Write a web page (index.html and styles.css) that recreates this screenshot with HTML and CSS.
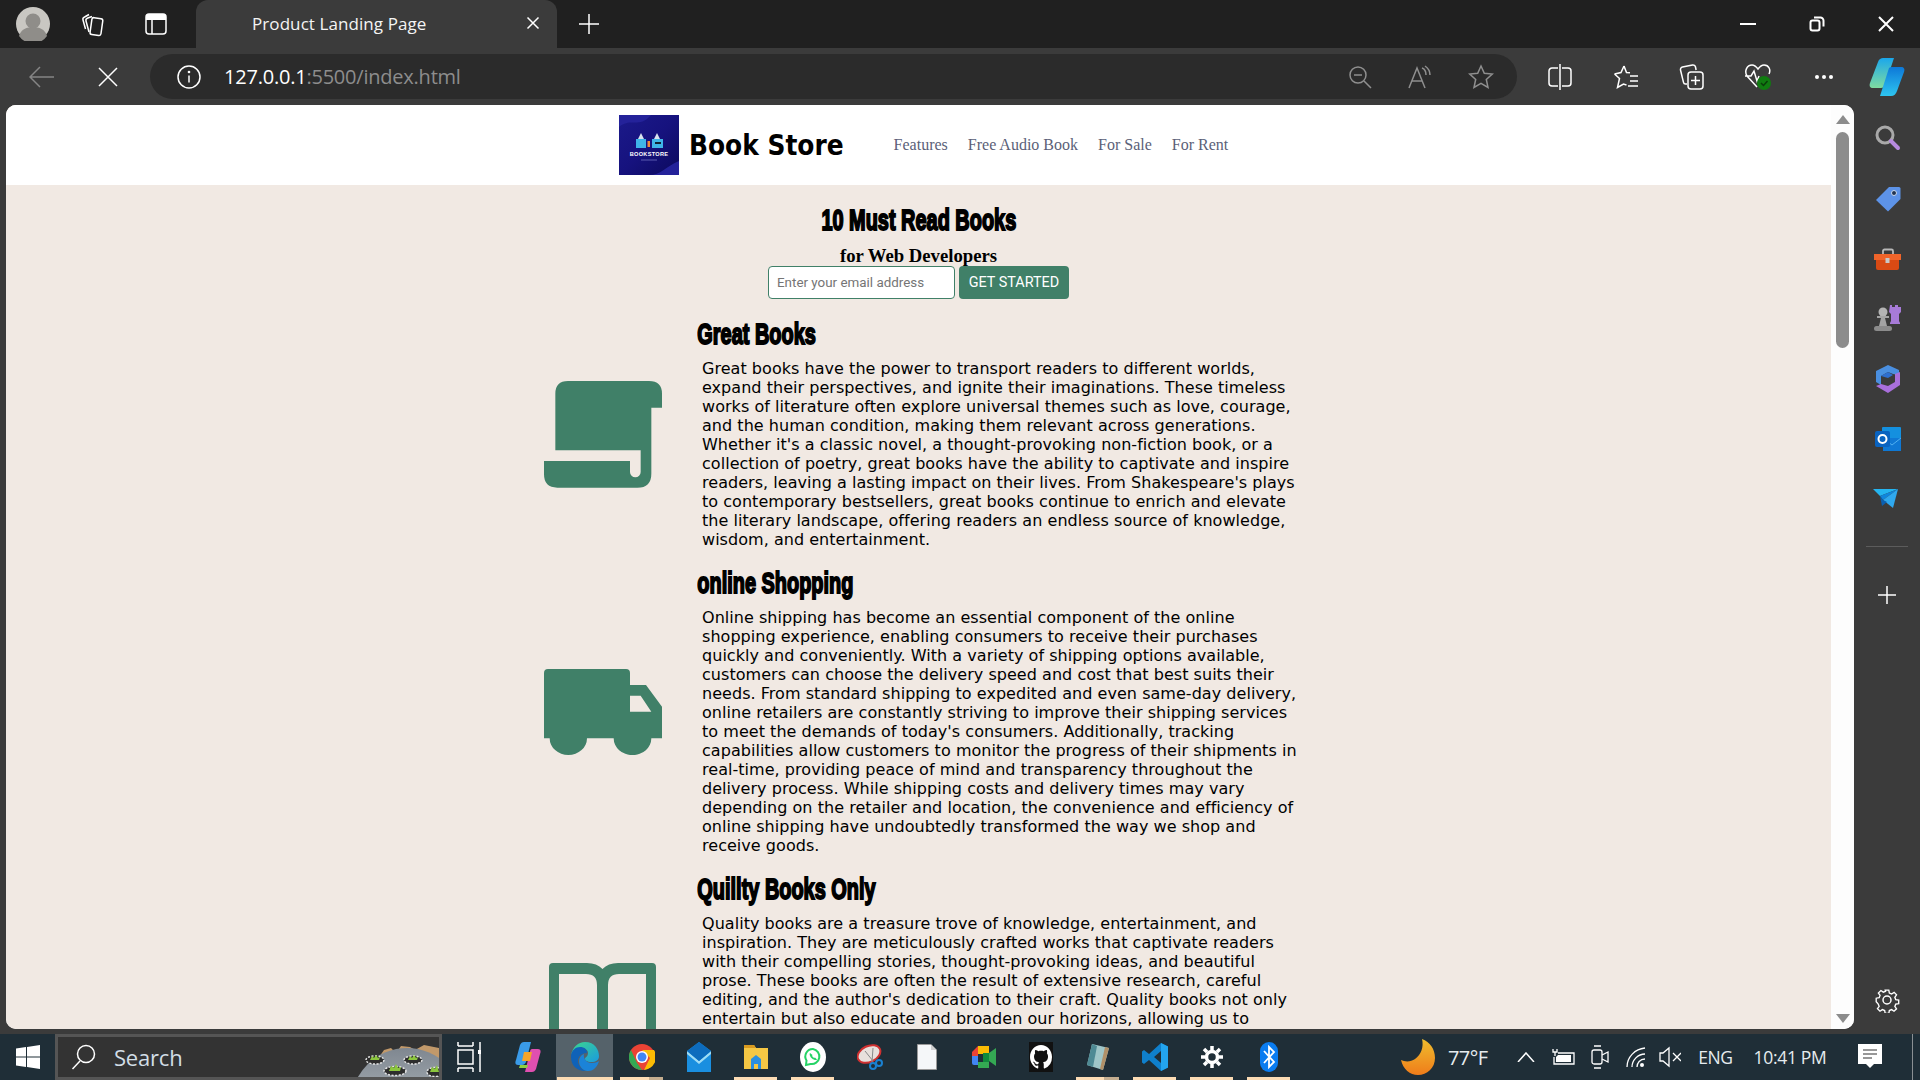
FILE: index.html
```html
<!DOCTYPE html>
<html lang="en">
<head>
<meta charset="utf-8">
<title>Product Landing Page</title>
<link rel="stylesheet" href="styles.css">
</head>
<body>
<div class="tabstrip">
  <div class="strip-left">
    <svg class="btn-profile" width="34" height="34" viewBox="0 0 34 34"><circle cx="17" cy="17" r="17" fill="#c9c7c2"/><circle cx="17" cy="14" r="7.500" fill="#8f8d89"/><path d="M3 29c2-7 8-9 14-9s12 2 14 9a17 17 0 0 1-28 0z" fill="#8f8d89"/></svg>
    <svg class="btn-strip" width="26" height="26" viewBox="0 0 26 26"><g class="ln"><rect x="11" y="7" width="11" height="17" rx="2" transform="rotate(8 16 15)"/><path d="M9 21L6 10c-.4-1.500.4-2.500 1.800-3L12 5.500"/><path d="M5.500 18L3 9c-.4-1.500.3-2.500 1.600-3L9 3.500"/></g></svg>
    <svg class="btn-strip" width="26" height="26" viewBox="0 0 26 26"><rect class="ln" x="3" y="3" width="20" height="20" rx="3"/><path d="M3 6a3 3 0 0 1 3-3h14a3 3 0 0 1 3 3v3H3z" fill="#fff"/><path class="ln" d="M9 9v14"/></svg>
  </div>
  <div class="tab">
    <span class="tab-title">Product Landing Page</span>
    <svg width="14" height="14" viewBox="0 0 14 14"><path class="ln" d="M1.500 1.500l11 11M12.500 1.500l-11 11"/></svg>
  </div>
  <svg class="tab-new" width="22" height="22" viewBox="0 0 22 22"><path class="ln" d="M11 1v20M1 11h20"/></svg>
  <div class="window-controls">
    <svg width="16" height="16" viewBox="0 0 16 16"><path class="ln bold" d="M0 8h16"/></svg>
    <svg width="16" height="16" viewBox="0 0 16 16"><rect class="ln bold" x="1.500" y="4.500" width="9" height="10" rx="2"/><path class="ln bold" d="M5 1.500h6a3 3 0 0 1 3.500 3v6"/></svg>
    <svg width="16" height="16" viewBox="0 0 16 16"><path class="ln bold" d="M1 1l14 14M15 1L1 15"/></svg>
  </div>
</div>

<div class="toolbar">
  <div class="tool"><svg width="26" height="22" viewBox="0 0 26 22"><path class="ln dim" d="M25 11H1M11 1L1 11l10 10"/></svg></div>
  <div class="tool"><svg width="20" height="20" viewBox="0 0 20 20"><path class="ln" d="M1 1l18 18M19 1L1 19"/></svg></div>
  <div class="address">
    <svg class="info" width="24" height="24" viewBox="0 0 24 24"><circle class="ln" cx="12" cy="12" r="11"/><path class="ln" d="M12 10.500v7"/><circle cx="12" cy="7" r="1.300" fill="#fff"/></svg>
    <span class="url"><b>127.0.0.1</b>:5500/index.html</span>
    <div class="addr-actions">
      <svg width="24" height="24" viewBox="0 0 24 24"><g class="ln dim2"><circle cx="10" cy="10" r="8"/><path d="M6 10h8M16 16l7 7"/></g></svg>
      <svg width="26" height="24" viewBox="0 0 26 24"><g class="ln dim2"><path d="M2 23L10 3l8 20M5 16h10"/><path d="M15 3c3 1 4 4 4 7M18 1c3 2 5 5 5 9"/></g></svg>
      <svg width="26" height="26" viewBox="0 0 26 26"><path class="ln dim2" d="M13 2l3.300 7.300 8 .8-6 5.400 1.700 7.900-7-4-7 4 1.700-7.900-6-5.400 8-.8z"/></svg>
    </div>
  </div>
  <div class="tools-right">
    <div class="tool"><svg width="24" height="26" viewBox="0 0 24 26"><g class="ln"><path d="M10 4H4a3 3 0 0 0-3 3v12a3 3 0 0 0 3 3h6M14 4h6a3 3 0 0 1 3 3v12a3 3 0 0 1-3 3h-6"/><path d="M12 0v26"/></g></svg></div>
    <div class="tool"><svg width="26" height="26" viewBox="0 0 26 26"><g class="ln"><path d="M11 2l2.500 6.500 3.500.3M1.500 10l6.500-1.500L11 2M1.500 10l5 4.500-2 9 6-3.500 3 1"/><path d="M17 12h8M17 17h8M15 22h10"/></g></svg></div>
    <div class="tool"><svg width="26" height="28" viewBox="0 0 26 28"><g class="ln"><path d="M8 21H6.500a2 2 0 0 1-2-1.600L1.500 7a2.500 2.500 0 0 1 2-3l10-2a2.500 2.500 0 0 1 3 2l.6 3"/><rect x="9" y="9" width="15" height="17" rx="3"/><path d="M16.500 13v9M12 17.500h9"/></g></svg></div>
    <div class="tool"><svg width="28" height="28" viewBox="0 0 28 28"><path class="ln" d="M13 24L3 13C0 8 3 2 8 2c3 0 4.500 2 6 4 1.500-2 3-4 6-4 5 0 7 5 5 9M1 13h6l3-5 3 10 2-5"/><circle cx="20" cy="20" r="7" fill="#107c10"/><path d="M17 20l2.500 2.500 4-4.500" fill="none" stroke="#0a3d0a" stroke-width="1.500"/></svg></div>
    <div class="tool"><svg width="20" height="6" viewBox="0 0 20 6"><circle cx="3" cy="3" r="2" fill="#fff"/><circle cx="10" cy="3" r="2" fill="#fff"/><circle cx="17" cy="3" r="2" fill="#fff"/></svg></div>
    <div class="tool tool-copilot"><svg width="36" height="38" viewBox="0 0 36 38"><defs><linearGradient id="cpa" x1="0" y1="0" x2="0" y2="1"><stop offset="0" stop-color="#1aa7ec"/><stop offset="1" stop-color="#7fdca0"/></linearGradient><linearGradient id="cpb" x1="0" y1="0" x2="0" y2="1"><stop offset="0" stop-color="#0d78d8"/><stop offset="1" stop-color="#2ec5f0"/></linearGradient></defs><path d="M14 0h11l-9 27c-1 2-2 3-4 3H4c-3 0-4-2-3-5l8-21c1-3 3-4 5-4z" fill="url(#cpa)"/><path d="M24 9h8c3 0 4 2 3 5l-7 19c-1 3-3 5-6 5H11l9-28c1-1 2-1 4-1z" fill="url(#cpb)"/></svg></div>
  </div>
</div>

<div class="workspace">
  <div class="viewport">
    <div class="page">
      <header class="site-header">
        <svg class="logo" width="60" height="60" viewBox="0 0 60 60"><defs><linearGradient id="lg" x1="0" y1="0" x2="1" y2="1"><stop offset="0" stop-color="#1b1a8a"/><stop offset=".5" stop-color="#16127e"/><stop offset="1" stop-color="#0c0a5c"/></linearGradient></defs><rect width="60" height="60" fill="url(#lg)"/><path d="M0 12C12 2 20 14 32 0H0z" fill="#24229a"/><path d="M60 46C46 52 42 60 30 60h30z" fill="#24229a"/><path d="M19 24l3-6 3 6z" fill="#d9e4ee"/><path d="M35 24l3-6 3 6z" fill="#d9e4ee"/><rect x="17" y="24" width="10" height="9" fill="#3fb4e8"/><rect x="33" y="24" width="11" height="9" fill="#3fb4e8"/><rect x="28.500" y="26" width="2.500" height="6" fill="#ef8a3a"/><rect x="36" y="27" width="6" height="2" fill="#123"/><text class="logo-text" x="30" y="41" text-anchor="middle">BOOKSTORE</text><path d="M22 45h16" stroke="#5a5ab0" stroke-width="1"/></svg>
        <div class="brand">Book Store</div>
        <nav class="site-nav"><span>Features</span><span>Free Audio Book</span><span>For Sale</span><span>For Rent</span></nav>
      </header>
      <main class="content">
        <section class="hero">
          <h2 class="display">10 Must Read Books</h2>
          <p class="hero-sub">for Web Developers</p>
          <form class="signup">
            <input class="email" type="email" placeholder="Enter your email address">
            <button class="cta" type="button">GET STARTED</button>
          </form>
        </section>
        <section class="features">
          <article class="feature">
            <div class="feature-icon"><svg width="118" height="107" viewBox="0 0 354 321"><path class="fill-green" d="M34 208V38Q34 0 72 0H315Q354 0 354 38V80H322V278Q322 320 280 320H40Q0 320 0 280V240H258V273a16 16 0 0 0 32 0V208Z"/></svg></div>
            <div class="feature-body">
              <h2 class="display">Great Books</h2>
              <p>Great books have the power to transport readers to different worlds,<br>expand their perspectives, and ignite their imaginations. These timeless<br>works of literature often explore universal themes such as love, courage,<br>and the human condition, making them relevant across generations.<br>Whether it's a classic novel, a thought-provoking non-fiction book, or a<br>collection of poetry, great books have the ability to captivate and inspire<br>readers, leaving a lasting impact on their lives. From Shakespeare's plays<br>to contemporary bestsellers, great books continue to enrich and elevate<br>the literary landscape, offering readers an endless source of knowledge,<br>wisdom, and entertainment.</p>
            </div>
          </article>
          <article class="feature">
            <div class="feature-icon"><svg width="118" height="86" viewBox="0 0 354 258"><path class="fill-green" fill-rule="evenodd" d="M12 0H246Q258 0 258 12V48H306L354 113V208H322A56 50 0 0 1 209 208H129A56 50 0 0 1 17 208H0V12Q0 0 12 0ZM258 80V128H322L290 80Z"/></svg></div>
            <div class="feature-body">
              <h2 class="display">online Shopping</h2>
              <p>Online shipping has become an essential component of the online<br>shopping experience, enabling consumers to receive their purchases<br>quickly and conveniently. With a variety of shipping options available,<br>customers can choose the delivery speed and cost that best suits their<br>needs. From standard shipping to expedited and even same-day delivery,<br>online retailers are constantly striving to improve their shipping services<br>to meet the demands of today's consumers. Additionally, tracking<br>capabilities allow customers to monitor the progress of their shipments in<br>real-time, providing peace of mind and transparency throughout the<br>delivery process. While shipping costs and delivery times may vary<br>depending on the retailer and location, the convenience and efficiency of<br>online shipping have undoubtedly transformed the way we shop and<br>receive goods.</p>
            </div>
          </article>
          <article class="feature feature-tall">
            <div class="feature-icon"><svg width="107" height="104" viewBox="0 0 107 104"><path class="fill-green" fill-rule="evenodd" d="M4 0H38Q48 0 53.500 6Q59 0 69 0H103Q107 0 107 4V104H0V4Q0 0 4 0ZM10 11V94H48V22Q48 11 37 11ZM59 22V94H97V11H70Q59 11 59 22Z"/></svg></div>
            <div class="feature-body">
              <h2 class="display">Quillty Books Only</h2>
              <p>Quality books are a treasure trove of knowledge, entertainment, and<br>inspiration. They are meticulously crafted works that captivate readers<br>with their compelling stories, thought-provoking ideas, and beautiful<br>prose. These books are often the result of extensive research, careful<br>editing, and the author's dedication to their craft. Quality books not only<br>entertain but also educate and broaden our horizons, allowing us to</p>
            </div>
          </article>
        </section>
      </main>
    </div>
    <div class="scrollbar">
      <span class="arrow-up"></span>
      <span class="thumb"></span>
      <span class="arrow-down"></span>
    </div>
  </div>
  <aside class="sidebar">
    <svg width="26" height="26" viewBox="0 0 26 26"><circle cx="10" cy="10" r="8" fill="none" stroke="#a9a9a9" stroke-width="3"/><path d="M16 16l7 7" stroke="#b78ae0" stroke-width="4" stroke-linecap="round"/></svg>
    <svg width="26" height="26" viewBox="0 0 26 26"><path d="M14 1h10a1.500 1.500 0 0 1 1.500 1.500V13L13 25.500 1 14z" fill="#5d93e8"/><circle cx="19" cy="7" r="2.500" fill="#22344f" stroke="#c8d8f0"/></svg>
    <svg width="28" height="22" viewBox="0 0 28 22"><path d="M9 6V3a1.500 1.500 0 0 1 1.500-1.500h7A1.500 1.500 0 0 1 19 3v3" fill="none" stroke="#b8b8b8" stroke-width="1.800"/><rect y="6" width="27" height="6" fill="#f0642a"/><path d="M2 12h23v8a2 2 0 0 1-2 2H4a2 2 0 0 1-2-2z" fill="#d94a14"/><rect x="11.500" y="10" width="4" height="5" fill="#c8c8c8"/></svg>
    <svg width="28" height="28" viewBox="0 0 28 28"><path d="M16 1h2v2h3V1h3v2h3V1h0v7l-2 2v7l1 2v1H16v-1l1-2v-7l-2-2z" fill="#a77bd8"/><circle cx="9" cy="8" r="4.500" fill="#b4b4b4"/><path d="M3 12h12v2H11l2 8H5l2-8H3z" fill="#a4a4a4"/><rect x="0" y="22" width="18" height="5" rx="2.500" fill="#8c8c8c"/></svg>
    <svg width="26" height="28" viewBox="0 0 26 28"><path d="M13 0L24 5v5l-6-1-5-2-7 4v9l-5-3V6z" fill="#4a8fe0"/><path d="M1 21l5-2 7 2 7-4v-8l5-2v13l-12 8z" fill="#a96fdc"/><path d="M6 11l7-4 5 3-5 3z" fill="#2e6fd0"/></svg>
    <svg width="26" height="26" viewBox="0 0 26 26"><rect x="7" y="1" width="19" height="16" rx="1" fill="#1490df"/><path d="M8 12h18v13H8z" fill="#0f78d4"/><path d="M8 12l9 7 9-7" fill="none" stroke="#50b0f0"/><rect y="5" width="15" height="16" rx="2" fill="#0a63c0"/><circle cx="7.500" cy="13" r="4" fill="none" stroke="#fff" stroke-width="2"/></svg>
    <svg width="28" height="20" viewBox="0 0 28 20"><path d="M0 1h25L7 8z" fill="#25b5f0"/><path d="M25 1L7 8l3 4z" fill="#0f86dc"/><path d="M25 1l-5 19-10-8z" fill="#2fa8ee"/><path d="M7 8l2 10 5-4-4-2z" fill="#0a5fb0"/></svg>
    <span class="side-divider"></span>
    <svg width="20" height="20" viewBox="0 0 20 20"><path class="ln" d="M10 1v18M1 10h18"/></svg>
    <svg class="side-gear" width="26" height="26" viewBox="0 0 26 26"><circle class="ln" cx="13" cy="13" r="4"/><path class="ln" d="M11 2h4l.6 3.300 2.500 1 2.800-1.800 2.700 2.800-1.900 2.700 1 2.500 3.300.5v4l-3.300.6-1 2.500 1.900 2.700-2.800 2.700-2.700-1.800-2.500 1-.6 3.300h-4l-.6-3.300-2.500-1-2.700 1.800-2.800-2.800 1.900-2.700-1-2.400L1 15v-4l3.300-.6 1-2.500-1.900-2.700 2.800-2.700 2.700 1.800 2.500-1z" transform="translate(1.300 1.300) scale(.9)"/></svg>
  </aside>
</div>

<footer class="taskbar">
  <div class="start"><svg width="24" height="24" viewBox="0 0 24 24"><path d="M0 3.400l10-1.400v9.500H0zM11 1.900L24 0v11.500H11zM0 12.500h10V22L0 20.600zM11 12.500h13V24l-13-1.900z" fill="#fff"/></svg></div>
  <div class="searchbox">
    <svg width="26" height="26" viewBox="0 0 26 26"><circle class="ln" cx="15" cy="10" r="8.500"/><path class="ln" d="M9 17l-7.500 8"/></svg>
    <span class="search-label">Search</span>
    <svg class="search-art" width="88" height="35" viewBox="0 0 88 35"><defs><linearGradient id="sp" x1="0" y1="0" x2="0" y2="1"><stop offset="0" stop-color="#7f8790"/><stop offset="1" stop-color="#cfd6da"/></linearGradient></defs><path d="M26 18l7-10 7-2 5 5 5-7 9 1 5 3 9-5 15 3v14z" fill="#c2996a"/><circle cx="56" cy="62" r="56" fill="url(#sp)"/><g fill="#2d2d2d" stroke="#e4e4e4" stroke-width="1.500" stroke-dasharray="2 1.500"><ellipse cx="24" cy="18" rx="9" ry="4"/><ellipse cx="62" cy="18" rx="9" ry="4"/><ellipse cx="44" cy="29" rx="11" ry="4.500"/><ellipse cx="84" cy="30" rx="8" ry="4.500"/></g><g fill="#8cc63e"><path d="M19 18l2-4 2 2 2-3 2 3 2-1-1 3z"/><path d="M57 18l2-4 2 2 2-3 2 3 2-1-1 3z"/><path d="M38 29l2-5 3 2 2-4 2 4 3-1-1 4z"/><path d="M79 30l2-5 3 2 2-4 2 7z"/></g></svg>
  </div>
  <div class="apps">
    <div class="app app-taskview"><svg width="24" height="32" viewBox="0 0 24 32"><g class="ln"><rect x="1" y="9" width="15" height="14"/><path d="M1 5V1M16 5V1M1 5h15M1 27h15M1 31v-4M16 31v-4M23 1v30"/></g><rect x="21" y="9" width="4" height="4" fill="#fff"/></svg></div>
    <div class="app"><svg width="26" height="30" viewBox="0 0 26 30"><path d="M9 0h7L11 20c-1 2-2 3-4 3H3c-3 0-3-3-2-5L5 3c1-2 2-3 4-3z" fill="#3a9be8"/><path d="M17 7h6c3 0 3 3 2 5l-4 15c-1 2-2 3-4 3h-7l5-20c0-2 1-3 2-3z" fill="#e04fb0"/><path d="M9 10h8l-2 9H7z" fill="#f4a52a"/><path d="M5 23h8l-1 3H4z" fill="#8ed040"/></svg></div>
    <div class="app app-active"><svg width="28" height="30" viewBox="0 0 28 30"><defs><linearGradient id="edg" x1="0" y1="0" x2="1" y2="1"><stop offset="0" stop-color="#3cd68c"/><stop offset="1" stop-color="#1a9be0"/></linearGradient></defs><path d="M14 0C24 0 28 8 28 14c0 4-3 6-8 6-4 0-6-2-6-3 0-2 3-2 3-6 0-4-5-6-9-5-4 1-7 4-8 7C2 5 7 0 14 0z" fill="url(#edg)"/><path d="M0 15C0 8 5 5 9 5c4 0 7 2 7 6-5 0-9 3-9 8 0 5 4 9 9 10C7 30 0 24 0 15z" fill="#0f62b8"/><path d="M16 29c-5-1-8-5-8-10 0-3 2-6 5-7-1 4 2 9 8 9 3 0 5-1 7-2-1 5-6 11-12 10z" fill="#1b83d8"/></svg></div>
    <div class="app"><svg width="26" height="30" viewBox="0 0 26 30" preserveAspectRatio="none"><circle cx="13" cy="15" r="13" fill="#ea4335"/><path d="M2 8L8 21 13 28a13 13 0 0 1-11-20z" fill="#34a853"/><path d="M13 8h12a13 13 0 0 1-10 20l6-12z" fill="#fbbc04"/><circle cx="13" cy="15" r="6" fill="#fff"/><circle cx="13" cy="15" r="4.500" fill="#4285f4"/></svg></div>
    <div class="app"><svg width="24" height="30" viewBox="0 0 24 30"><path d="M12 0l12 9v21H0V9z" fill="#1a8fe0"/><path d="M0 9l12 10 12-10v3L12 22 0 12z" fill="#9edcf5"/><path d="M12 0l12 9-12 10L0 9z" fill="#0d6cbd"/></svg></div>
    <div class="app"><svg width="24" height="26" viewBox="0 0 24 26"><path d="M0 1h10l2 3h12v21H0z" fill="#f5c744"/><path d="M0 1h10l2 3H0z" fill="#d89a20"/><path d="M7 15l5-4 5 4v10h-3v-5h-4v5H7z" fill="#2a8fe0"/></svg></div>
    <div class="app"><svg width="26" height="30" viewBox="0 0 26 30"><ellipse cx="13" cy="15" rx="13" ry="15" fill="#fff"/><path d="M13 7a7.500 7.500 0 0 0-6.500 11.500L6 23l4.500-1A7.500 7.500 0 1 0 13 7z" fill="none" stroke="#25d366" stroke-width="2"/><path d="M10 11c-1 1 0 4 2 5.500s4 2 5 1l-2-2-1 .5-2-2 .5-1z" fill="#25d366"/></svg></div>
    <div class="app"><svg width="26" height="28" viewBox="0 0 26 28"><ellipse cx="12" cy="11" rx="12" ry="8" fill="#e8e0dc" stroke="#d03030" stroke-width="2" transform="rotate(-25 12 11)"/><path d="M8 8l8 10M16 5l-1 14" stroke="#888" fill="none"/><circle cx="16" cy="23" r="3" fill="none" stroke="#1a80d0" stroke-width="2"/><circle cx="22" cy="20" r="3" fill="none" stroke="#1a80d0" stroke-width="2"/></svg></div>
    <div class="app"><svg width="20" height="26" viewBox="0 0 20 26"><path d="M.5.500H14L19.500 6v19.500H.5z" fill="#f5f7f9" stroke="#999"/><path d="M14 .500V6h5.500" fill="#d0d0d0"/></svg></div>
    <div class="app"><svg width="26" height="26" viewBox="0 0 26 26"><path d="M7 2h11v8H7z" fill="#fbbc04"/><path d="M7 2L1 8v4h6z" fill="#ea4335"/><path d="M1 12h6v6h0v3H3a2 2 0 0 1-2-2z" fill="#4285f4"/><path d="M7 18h11v6H7z" fill="#34a853"/><path d="M18 9l7-5v18l-7-5z" fill="#34a853"/><path d="M12 9h6v9h-6z" fill="#0f8a3c"/></svg></div>
    <div class="app"><div class="gh-tile"><svg width="22" height="24" viewBox="0 0 16 16" preserveAspectRatio="none"><path fill="#fff" d="M8 0C3.580 0 0 3.580 0 8c0 3.540 2.290 6.530 5.470 7.590.4.070.55-.17.55-.38 0-.19-.01-.82-.01-1.490-2.010.37-2.530-.49-2.690-.94-.09-.23-.48-.94-.82-1.130-.28-.15-.68-.52-.01-.53.630-.01 1.080.58 1.230.82.720 1.210 1.870.87 2.330.66.070-.52.28-.87.51-1.070-1.780-.2-3.640-.89-3.640-3.950 0-.87.31-1.590.82-2.150-.08-.2-.36-1.020.08-2.120 0 0 .67-.21 2.200.82.640-.18 1.320-.27 2-.27.680 0 1.360.090 2 .27 1.530-1.040 2.200-.82 2.200-.82.440 1.100.16 1.920.08 2.120.51.56.82 1.270.82 2.150 0 3.070-1.870 3.750-3.650 3.950.29.25.54.73.54 1.480 0 1.070-.01 1.930-.01 2.200 0 .21.15.46.55.38A8.013 8.013 0 0016 8c0-4.420-3.580-8-8-8z"/></svg></div></div>
    <div class="app"><svg width="24" height="28" viewBox="0 0 24 28"><path d="M6 1l17 4-6 22-16-5z" fill="#9fc6c8"/><path d="M19 4l4 1-6 22-3-1z" fill="#b09068"/><path d="M6 1L1 22l6 2L11 3z" fill="#4e8a94"/></svg></div>
    <div class="app"><svg width="26" height="28" viewBox="0 0 26 28"><path d="M19 0l7 3.500v21L19 28 7 17l-5 4L0 19.500v-11L2 7l5 4zM19 8l-7 6 7 6z" fill="#0f80cc"/><path d="M19 0l7 3.500v21L19 28z" fill="#23a4ee"/></svg></div>
    <div class="app"><svg width="22" height="22" viewBox="0 0 22 22"><circle cx="11" cy="11" r="5.500" fill="none" stroke="#fff" stroke-width="3.500"/><path d="M11 0v4M11 18v4M0 11h4M18 11h4M3 3l3 3M16 16l3 3M19 3l-3 3M6 16l-3 3" stroke="#fff" stroke-width="3.500"/></svg></div>
    <div class="app"><svg width="18" height="30" viewBox="0 0 18 30"><rect width="18" height="30" rx="9" fill="#0a7cf0"/><path d="M4 9l10 11-5 5V5l5 5L4 21" fill="none" stroke="#fff" stroke-width="1.800"/></svg></div>
  </div>
  <div class="tray">
    <svg class="moon" width="34" height="36" viewBox="0 0 34 36"><defs><linearGradient id="mn" x1="0" y1="0" x2="0" y2="1"><stop offset="0" stop-color="#efbd2e"/><stop offset="1" stop-color="#ef7c1a"/></linearGradient></defs><path d="M21 0c8 3 13 10 13 19 0 10-8 17-17 17C9 36 2 30 0 21c4 2 10 2 14-1 6-4 9-12 7-20z" fill="url(#mn)"/></svg>
    <span class="tray-temp">77°F</span>
    <svg class="t-caret" width="18" height="10" viewBox="0 0 18 10"><path class="ln" d="M1 10l8-9 8 9"/></svg>
    <svg class="t-batt" width="24" height="18" viewBox="0 0 24 18"><path class="ln thin" d="M6 5h16v11H2V9"/><path d="M6 7h13v7H4V9z" fill="#fff"/><path class="ln thin" d="M1 1v3h4V1M3 4v4"/></svg>
    <svg class="t-cam" width="18" height="24" viewBox="0 0 18 24"><path class="ln thin" d="M3 1h7M3 23h7"/><rect class="ln thin" x="1" y="5" width="10" height="14" rx="2"/><path class="ln thin" d="M11 10l6-3v10l-6-3"/></svg>
    <svg class="t-wifi" width="20" height="22" viewBox="0 0 20 22"><g class="ln thin"><path d="M1 21C1 11 9 3 19 2M6 21c0-7 6-13 13-13M11 21c0-4 3-8 8-8"/></g><circle cx="16" cy="19" r="2" fill="#fff"/></svg>
    <svg class="t-mute" width="22" height="22" viewBox="0 0 22 22"><path class="ln thin" d="M1 7v8h3l6 5V2L4 7zM14 7l8 8M22 7l-8 8"/></svg>
    <span class="tray-text t-eng">ENG</span>
    <span class="tray-text t-time">10:41 PM</span>
    <svg class="t-note" width="24" height="26" viewBox="0 0 24 26"><path d="M0 0h24v20h-8l-4 4-4-4H0z" fill="#fff"/><path d="M5 6h14M5 10h14M5 14h9" stroke="#333" stroke-width="1.200"/></svg>
    <span class="t-edge"></span>
  </div>
  <div class="indicators">
    <span class="ind i1"></span><span class="ind i2"></span><span class="ind i3"></span><span class="ind i4"></span><span class="ind i5"></span><span class="ind i6"></span><span class="ind i7"></span><span class="ind i8"></span>
  </div>
</footer>
</body>
</html>
```

FILE: styles.css
```css
* { box-sizing: border-box; }
html, body { margin: 0; height: 100%; }
body {
  width: 1920px;
  height: 1080px;
  overflow: hidden;
  background: #3b3b3b;
  font-family: "Open Sans", "Noto Sans", sans-serif;
  display: flex;
  flex-direction: column;
  color: #fff;
}
svg { display: block; flex: none; }
.ln { fill: none; stroke: #fff; stroke-width: 1.5; }
.ln.bold { stroke-width: 2; }
.ln.thin { stroke-width: 1.3; }
.ln.dim, .dim .ln { stroke: #858585; }
.ln.dim2, .dim2 .ln { stroke: #8f8f8f; }

/* tab strip */
.tabstrip { height: 48px; background: #202020; display: flex; align-items: center; flex: none; }
.strip-left { display: flex; align-items: center; width: 196px; padding-left: 16px; }
.strip-left svg:nth-child(2) { margin-left: 30px; }
.strip-left svg:nth-child(3) { margin-left: 37px; }
.tab {
  width: 361px; height: 48px; background: #3b3b3b; border-radius: 12px 12px 0 0;
  display: flex; align-items: center; justify-content: space-between; padding: 0 17px 2px 56px;
}
.tab-title { font-size: 17px; letter-spacing: .08px; color: #f4f4f4; }
.tab-new { margin-left: 21px; }
.window-controls { margin-left: auto; display: flex; gap: 53px; padding-right: 26px; }

/* toolbar */
.toolbar { height: 57px; background: #3b3b3b; display: flex; align-items: center; padding-left: 9px; flex: none; }
.tool { width: 66px; height: 45px; display: flex; align-items: center; justify-content: center; flex: none; }
.address {
  width: 1369px; height: 45px; margin-left: 9px; background: #2b2b2b; border-radius: 23px;
  display: flex; align-items: center; padding-left: 27px;
}
.url { margin-left: 23px; font-size: 20px; letter-spacing: -.22px; color: #8d8d8d; }
.url b { font-weight: 400; color: #fff; }
.addr-actions { margin-left: auto; display: flex; align-items: center; gap: 35px; padding-right: 23px; }
.tools-right { display: flex; margin-left: 10px; }
.tool-copilot { margin-left: -3px; }

/* workspace */
.workspace { height: 924px; display: flex; flex: none; }
.viewport { width: 1848px; margin-left: 6px; display: flex; border-radius: 10px; overflow: hidden; background: #fff; }
.page { width: 1825px; background: #f1e9e3; color: #000; overflow: hidden; flex: none; }
.scrollbar { width: 23px; background: #fdfdfd; display: flex; flex-direction: column; align-items: center; }
.arrow-up { width: 0; height: 0; margin-top: 10px; border: 7px solid transparent; border-top: 0; border-bottom: 9px solid #8c8c8c; }
.thumb { width: 13px; height: 216px; margin-top: 8px; border-radius: 7px; background: #8c8c8c; }
.arrow-down { width: 0; height: 0; margin-top: auto; margin-bottom: 6px; border: 7px solid transparent; border-bottom: 0; border-top: 9px solid #8c8c8c; }

.sidebar { width: 66px; display: flex; flex-direction: column; align-items: center; flex: none; padding-top: 20px; }
.sidebar > svg:nth-child(1) { margin-bottom: 35px; margin-left: 2px; }
.sidebar > svg:nth-child(2) { margin-bottom: 36px; margin-left: 2px; }
.sidebar > svg:nth-child(3) { margin-bottom: 34px; margin-left: 2px; }
.sidebar > svg:nth-child(4) { margin-bottom: 33px; margin-left: 2px; }
.sidebar > svg:nth-child(5) { margin-bottom: 33px; margin-left: 2px; }
.sidebar > svg:nth-child(6) { margin-bottom: 36px; margin-left: 2px; }
.side-divider { width: 42px; height: 1px; background: #5c5c5c; margin: 38px 0; }
.side-gear { margin-top: auto; margin-bottom: 16px; }

/* site header */
.site-header { height: 80px; background: #fff; display: flex; align-items: center; padding-left: 613px; }
.brand { margin: 2px 0 0 10px; font: 700 27.700px/60px "DejaVu Sans Condensed", "DejaVu Sans", sans-serif; color: #000; }
.site-nav { margin-left: 50px; display: flex; gap: 20px; font: 16px/1 "Liberation Serif", serif; color: #5b5f78; }
.logo-text { font: 700 5.600px "Liberation Sans", sans-serif; letter-spacing: .3px; fill: #fff; }

/* content */
.content { width: 767px; margin: 0 auto; }
.display {
  margin: 0; font: 700 29px/30px "Liberation Sans", sans-serif;
  color: #000; -webkit-text-stroke: 1.9px #000;
  transform: scaleX(.687); transform-origin: left center; white-space: nowrap;
}
.feature-body .display { padding-left: 2px; }
.hero { display: flex; flex-direction: column; align-items: center; padding-top: 20px; }
.hero .display { transform-origin: center; }
.hero-sub { margin: 10px 0 0; font: 700 18.700px/21px "Liberation Serif", serif; }
.signup { display: flex; gap: 4px; }
.email {
  width: 187px; height: 33px; padding: 0 8px; background: #fff; border: 1px solid #408068; border-radius: 4px;
  font: 13.400px Roboto, sans-serif; outline: none;
}
.email::placeholder { color: #757575; opacity: 1; }
.cta { width: 110px; height: 33px; padding: 0; border: 0; border-radius: 4px; background: #408068; color: #fff; font: 14.400px Roboto, sans-serif; }

.features { margin-top: 20px; }
.feature { display: flex; align-items: center; margin-bottom: 19px; }
.feature-tall { min-height: 288px; align-items: flex-start; }
.feature-icon { width: 135px; margin-right: 26px; display: flex; justify-content: center; flex: none; }
.feature-body { flex: 1; }
.feature-body p {
  margin: 10px 0 0; padding-left: 6px; white-space: nowrap;
  font: 16px/19px "DejaVu Sans", sans-serif; letter-spacing: .04px; color: #000;
}
.fill-green { fill: #408068; }
.feature-tall .feature-icon { margin-top: 89px; }

/* taskbar */
.taskbar { margin-top: 5px; height: 46px; background: #1f2e37; display: flex; align-items: center; flex: none; position: relative; }
.start { width: 55px; display: flex; justify-content: center; }
.searchbox {
  width: 387px; height: 46px; background: #333; border: 3px solid #555;
  display: flex; align-items: center; padding-left: 13px; position: relative; overflow: hidden;
}
.search-label { margin-left: 17px; font-size: 22px; color: #d2dee6; letter-spacing: -.2px; }
.search-art { position: absolute; right: 0; bottom: 0; }
.apps { display: flex; }
.app { width: 57px; height: 46px; display: flex; align-items: center; justify-content: center; }
.app-taskview { padding-right: 4px; }
.app-active { background: #55626a; }
.gh-tile { width: 24px; height: 30px; background: #111; display: flex; align-items: center; justify-content: center; }

.tray { position: absolute; left: 1401px; right: 0; top: 0; height: 46px; display: flex; align-items: center; }
.tray-temp { margin-left: 13px; font-size: 20px; letter-spacing: -.6px; color: #e6ecef; }
.t-caret { margin-left: 30px; }
.t-batt { margin-left: 17px; }
.t-cam { margin-left: 15px; }
.t-wifi { margin-left: 17px; }
.t-mute { margin-left: 13px; }
.tray-text { font-size: 17.500px; color: #e6ecef; }
.t-eng { margin-left: 17px; letter-spacing: -.5px; }
.t-time { margin-left: 21px; letter-spacing: -.3px; }
.t-note { margin-left: 31px; }
.t-edge { width: 1px; height: 46px; background: #8a8f93; margin-left: 30px; }

.indicators { position: absolute; left: 0; bottom: 0; width: 100%; height: 3px; }
.ind { position: absolute; top: 0; height: 3px; background: #fcdcb4; }
.i1 { left: 557px; width: 56px; }
.i2 { left: 620px; width: 43px; background: linear-gradient(90deg, #fcdcb4 68%, #c4ae90 68%); }
.i3 { left: 734px; width: 43px; }
.i4 { left: 791px; width: 43px; }
.i5 { left: 1076px; width: 43px; background: linear-gradient(90deg, #fcdcb4 66%, #c4ae90 66%); }
.i6 { left: 1133px; width: 43px; }
.i7 { left: 1190px; width: 43px; }
.i8 { left: 1247px; width: 43px; }
```
